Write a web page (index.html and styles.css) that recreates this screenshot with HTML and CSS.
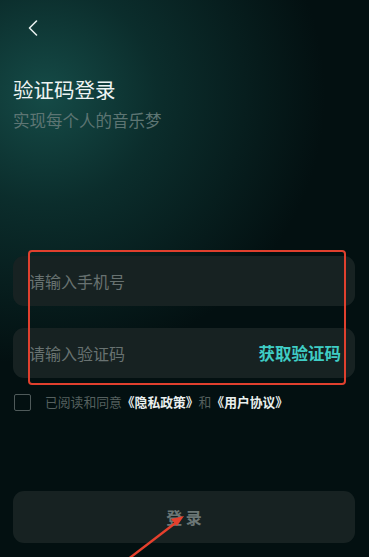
FILE: index.html
```html
<!DOCTYPE html>
<html lang="zh">
<head>
<meta charset="utf-8">
<link rel="stylesheet" href="styles.css">
</head>
<body>
<div class="page">
  <div class="header">
    <svg class="back" width="12" height="18" viewBox="0 0 12 18"><path d="M9.5 2 L2.5 9 L9.5 16" fill="none" stroke="#e6eeed" stroke-width="1.6" stroke-linecap="round" stroke-linejoin="round"/></svg>
  </div>
  <div class="intro">
    <div class="title">验证码登录</div>
    <div class="subtitle">实现每个人的音乐梦</div>
  </div>
  <div class="form">
    <div class="field"><span class="ph">请输入手机号</span></div>
    <div class="field"><span class="ph">请输入验证码</span><span class="code">获取验证码</span></div>
    <div class="agree">
      <span class="box"></span>
      <span class="agree-text">已阅读和同意<b>《隐私政策》</b>和<b>《用户协议》</b></span>
    </div>
  </div>
  <div class="login">登 录</div>
  <div class="mark"></div>
  <svg class="arrow" width="369" height="557" viewBox="0 0 369 557"><line x1="127" y1="560" x2="178" y2="521" stroke="#e5402d" stroke-width="2.4"/><polygon points="184,516 171,519 177,526" fill="#e5402d"/></svg>
</div>
</body>
</html>
```
FILE: styles.css
```css
html, body { margin: 0; padding: 0; }
body { background: #031010; font-family: "Noto Sans CJK SC", "Noto Sans", sans-serif; }
.page {
  position: relative;
  width: 369px;
  height: 557px;
  overflow: hidden;
  box-sizing: border-box;
  padding: 0 14px 0 13px;
  display: flex;
  flex-direction: column;
  background:
    radial-gradient(ellipse 280px 270px at 45px 95px, rgba(22,78,74,0.95) 0%, rgba(14,55,53,0.75) 40%, rgba(3,16,17,0) 100%),
    #031011;
}
.header { height: 40px; padding: 19px 0 0 14px; box-sizing: border-box; }
.back { display: block; }
.intro { margin-top: 35px; }
.title { font-size: 20.5px; line-height: 29px; color: #eef4f3; }
.subtitle { margin-top: 5px; font-size: 16.5px; line-height: 22px; color: #5d7573; }
.form { margin-top: 125px; display: flex; flex-direction: column; gap: 22px; }
.field {
  height: 50px;
  border-radius: 11px;
  background: #172222;
  display: flex;
  align-items: center;
  justify-content: space-between;
  padding: 0 14px 0 16px;
}
.ph { font-size: 16px; color: #687271; }
.code { font-size: 16.5px; font-weight: 700; color: #3fcdc5; }
.agree { margin-top: -7px; display: flex; align-items: center; gap: 14px; padding-left: 1px; }
.box { width: 15px; height: 15px; border: 1.5px solid #4f5a5a; border-radius: 2px; }
.agree-text { font-size: 12.8px; color: #55605f; line-height: 18px; }
.agree-text b { color: #e9efee; font-weight: 700; }
.login {
  margin-top: 80px;
  height: 52px;
  border-radius: 11px;
  background: #172222;
  display: flex;
  align-items: center;
  justify-content: center;
  font-size: 16px;
  font-weight: 700;
  color: #6b7675;
}
.mark {
  position: absolute;
  left: 28px;
  top: 250px;
  width: 314px;
  height: 131px;
  border: 2px solid #e0402e;
  border-radius: 4px;
}
.arrow { position: absolute; left: 0; top: 0; pointer-events: none; }
```
